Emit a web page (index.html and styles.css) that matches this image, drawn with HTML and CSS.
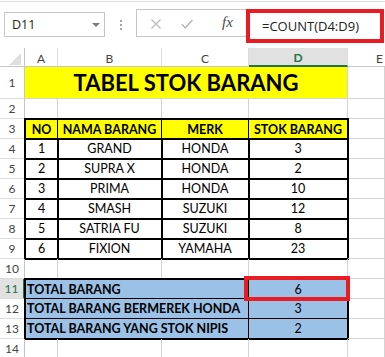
FILE: index.html
```html
<!DOCTYPE html>
<html>
<head>
<meta charset="utf-8">
<link rel="stylesheet" href="styles.css">
</head>
<body>
<div class="top-strip"></div>
<div class="toolbar">
  <div class="namebox"><span>D11</span><svg class="dd" width="8" height="4" viewBox="0 0 8 4"><polygon points="0,0 8,0 4,4" fill="#7a7a7a"/></svg></div>
  <div class="grip"><i></i><i></i><i></i></div>
  <div class="btns">
    <svg class="ic-x" width="10" height="10" viewBox="0 0 10 10"><path d="M0.5 0.5 L9.5 9.5 M9.5 0.5 L0.5 9.5" stroke="#b9b9b9" stroke-width="1.2" fill="none"/></svg>
    <svg class="ic-ok" width="12" height="10" viewBox="0 0 12 10"><path d="M0.8 5.2 L4.3 8.8 L11.4 1" stroke="#b9b9b9" stroke-width="1.6" fill="none"/></svg>
    <span class="fx">fx</span>
  </div>
  <div class="formula">=COUNT(D4:D9)</div>
</div>

<div class="sheet">
  <div class="corner"><svg width="24" height="18" viewBox="0 0 24 18"><polygon points="21,5 21,17 9,17" fill="#dfdfdf"/></svg></div>
  <div class="ch">A</div>
  <div class="ch">B</div>
  <div class="ch">C</div>
  <div class="ch sel">D</div>
  <div class="ch edge">E</div>

  <div class="rh">1</div>
  <div class="c y title">TABEL STOK BARANG</div>
  <div class="c"></div>

  <div class="rh">2</div>
  <div class="c"></div><div class="c"></div><div class="c"></div><div class="c"></div><div class="c"></div>

  <div class="rh">3</div>
  <div class="c y k kl kt hd">NO</div>
  <div class="c y k kt hd">NAMA BARANG</div>
  <div class="c y k kt hd">MERK</div>
  <div class="c y k kt hd">STOK BARANG</div>
  <div class="c"></div>

  <div class="rh">4</div>
  <div class="c k kl">1</div><div class="c k">GRAND</div><div class="c k">HONDA</div><div class="c k">3</div><div class="c"></div>
  <div class="rh">5</div>
  <div class="c k kl">2</div><div class="c k">SUPRA X</div><div class="c k">HONDA</div><div class="c k">2</div><div class="c"></div>
  <div class="rh">6</div>
  <div class="c k kl">3</div><div class="c k">PRIMA</div><div class="c k">HONDA</div><div class="c k">10</div><div class="c"></div>
  <div class="rh">7</div>
  <div class="c k kl">4</div><div class="c k">SMASH</div><div class="c k">SUZUKI</div><div class="c k">12</div><div class="c"></div>
  <div class="rh">8</div>
  <div class="c k kl">5</div><div class="c k">SATRIA FU</div><div class="c k">SUZUKI</div><div class="c k">8</div><div class="c"></div>
  <div class="rh">9</div>
  <div class="c k kl">6</div><div class="c k">FIXION</div><div class="c k">YAMAHA</div><div class="c k">23</div><div class="c"></div>

  <div class="rh">10</div>
  <div class="c"></div><div class="c"></div><div class="c"></div><div class="c"></div><div class="c"></div>

  <div class="rh sel">11</div>
  <div class="c b k kl kt lbl">TOTAL BARANG</div>
  <div class="c b k kt active">6<span class="mark"></span></div>
  <div class="c"></div>

  <div class="rh">12</div>
  <div class="c b k kl lbl">TOTAL BARANG BERMEREK HONDA</div>
  <div class="c b k">3</div>
  <div class="c"></div>

  <div class="rh">13</div>
  <div class="c b k kl lbl">TOTAL BARANG YANG STOK NIPIS</div>
  <div class="c b k">2</div>
  <div class="c"></div>

  <div class="rh">14</div>
  <div class="c"></div><div class="c"></div><div class="c"></div><div class="c"></div><div class="c"></div>
</div>
</body>
</html>
```

FILE: styles.css
```css
html, body {
  margin: 0;
  padding: 0;
  background: #fff;
}
body {
  width: 385px;
  height: 357px;
  overflow: hidden;
  font-family: Lato, "Noto Sans", sans-serif;
  color: #000;
}
.top-strip {
  height: 1px;
  border-bottom: 1px solid #dadada;
}
.toolbar {
  display: flex;
  align-items: flex-start;
  height: 46px;
}
.namebox {
  margin: 10px 0 0 4px;
  width: 101px;
  height: 25px;
  box-sizing: border-box;
  border: 1px solid #c6c6c6;
  display: flex;
  align-items: center;
  justify-content: space-between;
  padding: 0 4px 0 7px;
  font-family: "Open Sans", sans-serif;
  font-size: 12.5px;
  color: #222;
}
.namebox .dd {
  display: block;
  margin-top: 1px;
}
.grip {
  margin: 18px 0 0 15px;
  display: flex;
  flex-direction: column;
  gap: 2px;
}
.grip i {
  display: block;
  width: 2px;
  height: 2px;
  background: #a8a8a8;
}
.btns {
  margin: 7px 0 0 14px;
  width: 110px;
  height: 28px;
  box-sizing: border-box;
  border: 1px solid #c6c6c6;
  border-right: none;
  display: flex;
  align-items: center;
  padding: 2px 0 0 14px;
}
.btns svg { display: block; }
.ic-ok { margin-left: 20px; }
.fx {
  margin-left: 29px;
  font-family: "Liberation Serif", serif;
  font-style: italic;
  font-size: 15px;
  color: #4a4a4a;
  margin-top: -3px;
}
.formula {
  margin-top: 7px;
  width: 138px;
  height: 34px;
  box-sizing: border-box;
  border: 4px solid #e91c24;
  padding: 0 0 1px 12px;
  display: flex;
  align-items: center;
  font-family: "Open Sans", sans-serif;
  font-size: 13px;
  color: #222;
  white-space: nowrap;
}

.sheet {
  display: grid;
  grid-template-columns: 25px 33px 104px 87px 99px 37px;
  grid-template-rows: 19px 32px repeat(13, 20px);
  font-size: 12.5px;
  overflow: hidden;
  height: 309px;
}
.sheet > div {
  box-sizing: border-box;
  display: flex;
  align-items: center;
  justify-content: center;
  white-space: nowrap;
  min-width: 0;
}
.corner {
  border-right: 1px solid #c6c6c6;
  border-bottom: 1px solid #c6c6c6;
  align-items: flex-start !important;
}
.corner svg { display: block; }
.ch {
  border-right: 1px solid #dcdcdc;
  border-bottom: 1px solid #c6c6c6;
  color: #444;
  font-size: 12px;
  padding-top: 2px;
}
.ch.edge {
  justify-content: flex-start !important;
  padding-left: 28px;
  border-right: none;
}
.ch.sel {
  background: #e1e1e1;
  border-bottom: 2px solid #217346;
  color: #217346;
  font-weight: 700;
}
.rh {
  border-right: 1px solid #c6c6c6;
  border-bottom: 1px solid #dcdcdc;
  color: #444;
  font-size: 12px;
}
.rh.sel {
  background: #e1e1e1;
  border-right: 2px solid #217346;
  color: #217346;
}
.c {
  border-right: 1px solid #d4d4d4;
  border-bottom: 1px solid #d4d4d4;
}
.y { background: #ffff00; }
.b { background: #9bc2e6; }
.k {
  border-right-color: #000;
  border-bottom-color: #000;
  outline: 1px solid #000;
}
.kl { border-left: 1px solid #000; }
.kt { border-top: 1px solid #000; }
.hd { font-weight: 700; }
.title {
  grid-column: span 4;
  font-weight: 700;
  font-size: 22px;
}
.lbl {
  grid-column: span 3;
  justify-content: flex-start !important;
  padding-left: 1px;
  font-weight: 700;
}
.active { position: relative; }
.mark {
  position: absolute;
  left: -5px;
  right: -3px;
  top: -4px;
  bottom: -3px;
  border: 4px solid #e91c24;
  z-index: 2;
}
```
